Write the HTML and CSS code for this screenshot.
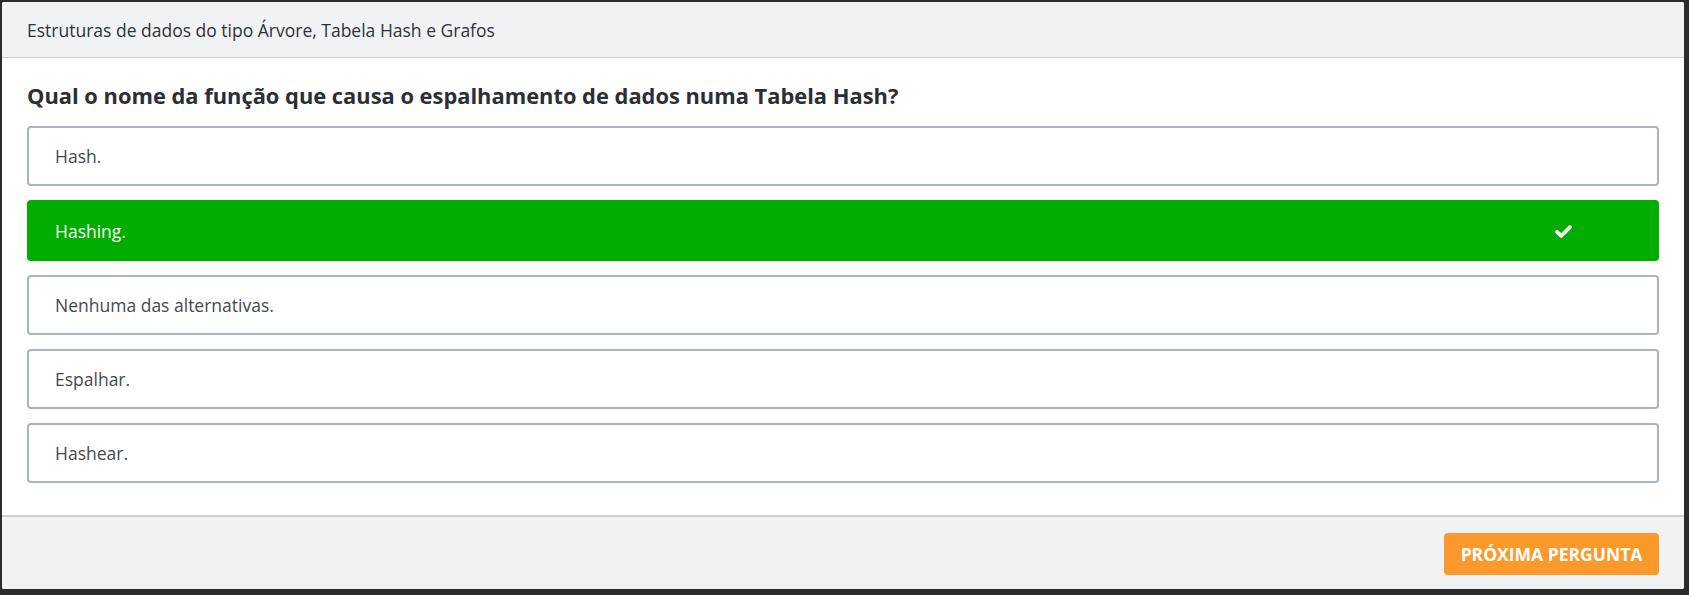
FILE: index.html
```html
<!DOCTYPE html>
<html lang="pt">
<head>
<meta charset="utf-8">
<title>Quiz</title>
<link rel="stylesheet" href="styles.css">
</head>
<body>
<div class="card">
  <div class="card-header">Estruturas de dados do tipo Árvore, Tabela Hash e Grafos</div>
  <div class="card-body">
    <h2 class="question">Qual o nome da função que causa o espalhamento de dados numa Tabela Hash?</h2>
    <ul class="options">
      <li class="option">Hash.</li>
      <li class="option correct">Hashing.
        <svg class="check" width="17" height="13" viewBox="0 0 17 13"><path d="M2 6.8 L6.2 10.8 L15 2.2" fill="none" stroke="#fff" stroke-width="3.8" stroke-linecap="round" stroke-linejoin="round"/></svg>
      </li>
      <li class="option">Nenhuma das alternativas.</li>
      <li class="option">Espalhar.</li>
      <li class="option">Hashear.</li>
    </ul>
  </div>
  <div class="card-footer">
    <button class="btn-next">PRÓXIMA PERGUNTA</button>
  </div>
</div>
</body>
</html>
```
FILE: styles.css
```css
html, body {
  margin: 0;
  padding: 0;
}
body {
  background: #2b2b2b;
  padding: 2px 5px 6px 2px;
  font-family: "Open Sans", "Noto Sans", sans-serif;
  box-sizing: border-box;
  height: 595px;
}
.card {
  background: #fff;
  height: 587px;
  display: flex;
  flex-direction: column;
  border-radius: 2px;
  overflow: hidden;
}
.card-header {
  background: #f1f2f4;
  border-bottom: 1px solid #c9cdd2;
  height: 56px;
  box-sizing: border-box;
  padding: 0 25px;
  display: flex;
  align-items: center;
  font-size: 17.5px;
  color: #2f3338;
}
.card-body {
  padding: 0 25px;
  flex: 1;
  border-bottom: 2px solid #ccd0d5;
}
.question {
  margin: 0;
  height: 68px;
  box-sizing: border-box;
  padding-top: 23px;
  font-size: 21.875px;
  font-weight: 700;
  color: #2b2e33;
  line-height: 29px;
}
.options {
  list-style: none;
  margin: 0;
  padding: 0;
  display: flex;
  flex-direction: column;
  gap: 14px;
}
.option {
  height: 60px;
  box-sizing: border-box;
  border: 2px solid #aab2bb;
  border-radius: 4px;
  padding: 0 26px;
  display: flex;
  align-items: center;
  font-size: 17.5px;
  color: #45494e;
  position: relative;
}
.option.correct {
  background: #00ad00;
  border-color: #00ad00;
  color: #fff;
  height: 61px;
}
.check {
  position: absolute;
  left: 1526px;
  top: 23px;
}
.card-footer {
  background: #f1f2f4;
  height: 72px;
  box-sizing: border-box;
  padding: 0 25px;
  display: flex;
  align-items: center;
  justify-content: flex-end;
}
.btn-next {
  background: #fb992c;
  border: none;
  border-radius: 4px;
  color: #fff;
  font-family: "Open Sans", "Noto Sans", sans-serif;
  font-weight: 700;
  font-size: 17.5px;
  height: 42px;
  width: 215px;
  padding: 0;
  margin-top: 1px;
}
```
